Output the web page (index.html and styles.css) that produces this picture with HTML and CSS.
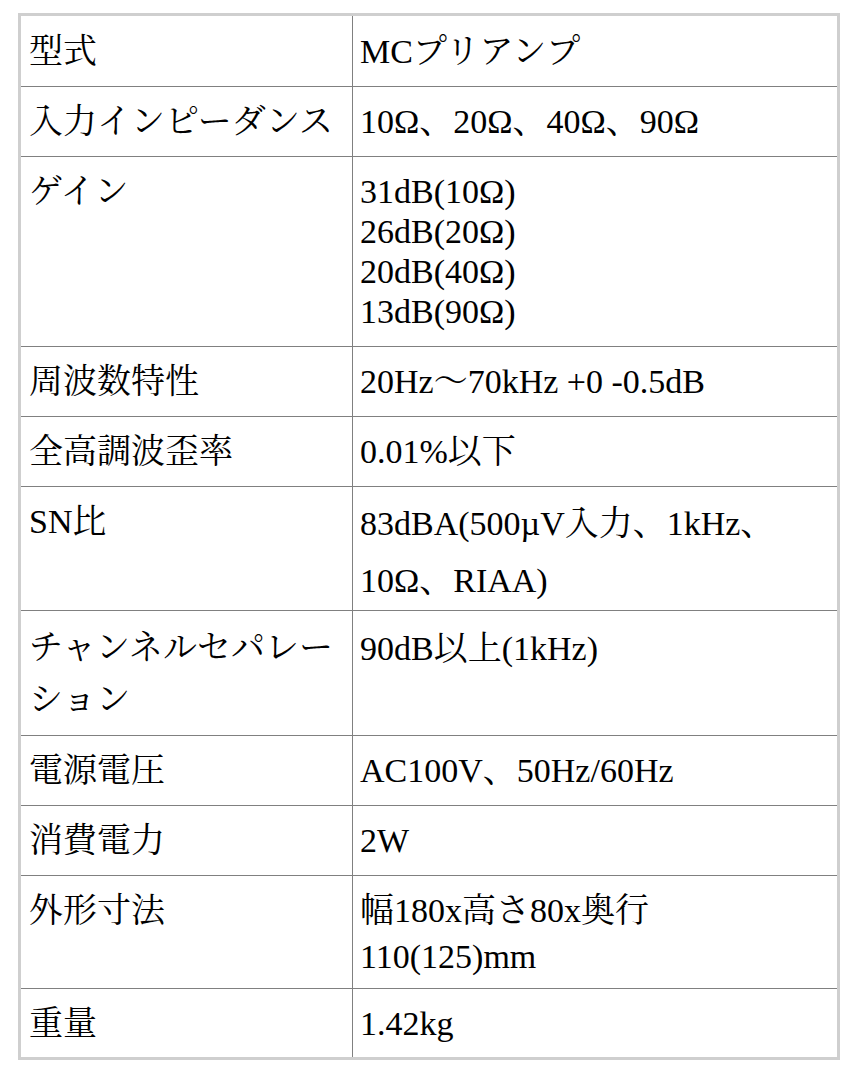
FILE: index.html
```html
<!DOCTYPE html>
<html lang="ja">
<head>
<meta charset="utf-8">
<title>仕様</title>
<link rel="stylesheet" href="styles.css">
</head>
<body>
<table class="spec">
  <tr>
    <td class="key">型式</td>
    <td class="val">MCプリアンプ</td>
  </tr>
  <tr>
    <td class="key">入力インピーダンス</td>
    <td class="val">10Ω、20Ω、40Ω、90Ω</td>
  </tr>
  <tr>
    <td class="key">ゲイン</td>
    <td class="val">31dB(10Ω)<br>26dB(20Ω)<br>20dB(40Ω)<br>13dB(90Ω)</td>
  </tr>
  <tr>
    <td class="key">周波数特性</td>
    <td class="val">20Hz〜70kHz +0 -0.5dB</td>
  </tr>
  <tr>
    <td class="key">全高調波歪率</td>
    <td class="val">0.01%以下</td>
  </tr>
  <tr class="sn">
    <td class="key">SN比</td>
    <td class="val">83dBA(500µV入力、1kHz、<br>10Ω、RIAA)</td>
  </tr>
  <tr class="ch">
    <td class="key">チャンネルセパレーション</td>
    <td class="val">90dB以上(1kHz)</td>
  </tr>
  <tr>
    <td class="key">電源電圧</td>
    <td class="val">AC100V、50Hz/60Hz</td>
  </tr>
  <tr>
    <td class="key">消費電力</td>
    <td class="val">2W</td>
  </tr>
  <tr class="dim">
    <td class="key">外形寸法</td>
    <td class="val">幅180x高さ80x奥行<br>110(125)mm</td>
  </tr>
  <tr>
    <td class="key">重量</td>
    <td class="val">1.42kg</td>
  </tr>
</table>
</body>
</html>
```

FILE: styles.css
```css
html, body {
  margin: 0;
  padding: 0;
  background: #ffffff;
}

.spec {
  margin: 13px 0 0 18px;
  width: 822px;
  box-sizing: border-box;
  border: 3px solid #cfcfcf;
  border-collapse: separate;
  border-spacing: 0;
  table-layout: fixed;
  font-family: "Liberation Serif", "Noto Serif CJK JP", "Noto Sans CJK JP", serif;
  font-size: 34px;
  color: #000000;
}

.spec td {
  box-sizing: border-box;
  vertical-align: top;
  padding: 15px 8px 14px 7px;
  line-height: 40px;
  border-bottom: 1px solid #808080;
}

.spec .key {
  width: 332px;
  padding-left: 8px;
  border-right: 1px solid #808080;
}

.spec tr:first-child td {
  padding-top: 16px;
}

.spec tr:last-child td {
  border-bottom: 0;
  padding-bottom: 13px;
}

.spec .sn .val {
  line-height: 57px;
  padding-top: 8px;
  padding-bottom: 1px;
}

.spec .ch .key {
  line-height: 52px;
  padding-top: 11px;
  padding-bottom: 9px;
}

.spec .ch .val {
  padding-top: 18px;
}

.spec .dim .val {
  line-height: 46px;
  padding-top: 12px;
  padding-bottom: 8px;
}
```
